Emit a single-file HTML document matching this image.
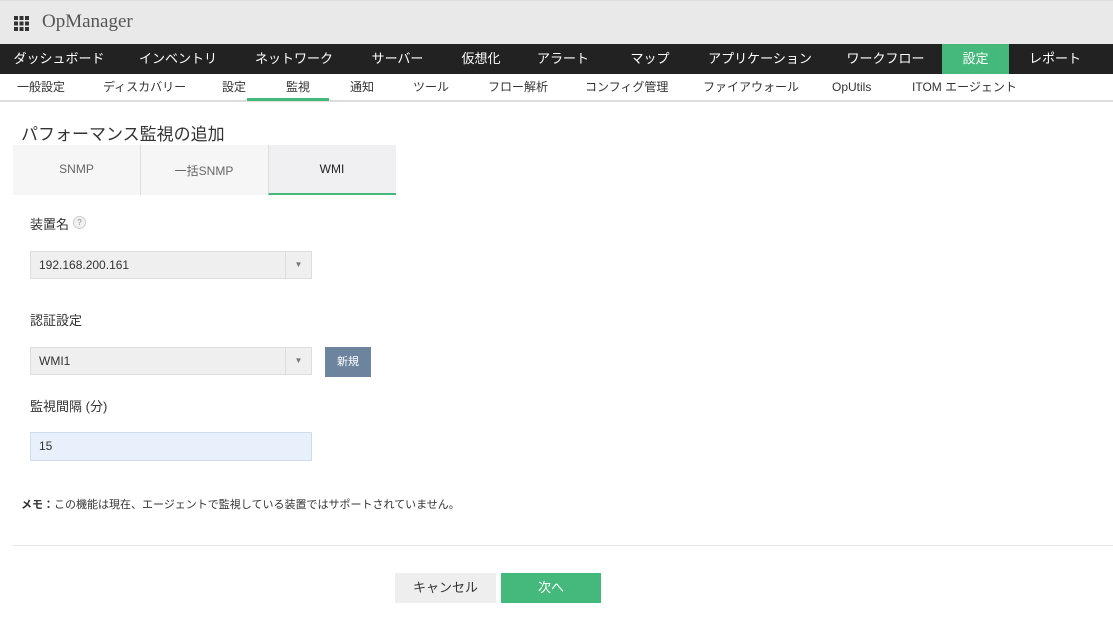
<!DOCTYPE html>
<html><head><meta charset="utf-8"><style>
*{box-sizing:border-box;margin:0;padding:0}
body{width:1113px;height:642px;background:#fff;font-family:"Liberation Sans","Noto Sans CJK JP",sans-serif;position:relative;overflow:hidden;color:#333}
.abs{position:absolute}
#hdr{left:0;top:0;width:1113px;height:44px;background:#e9e9e9;border-top:1px solid #ddd}
#nav{left:0;top:44px;width:1113px;height:30px;background:#222}
#nav span{position:absolute;top:0;height:30px;line-height:30px;color:#fff;font-size:13px;text-align:center}
#sub{left:0;top:74px;width:1113px;height:28px;background:#fff;border-bottom:2px solid #ddd}
#sub span{position:absolute;top:0;line-height:26px;font-size:12px;color:#333}
.lbl{font-size:13px;color:#333}
.sel{background:#efefef;border:1px solid #ddd;height:28px;font-size:12px;line-height:26px;padding-left:8px}
.sel i{position:absolute;right:0;top:0;width:26px;height:26px;border-left:1px solid #ddd;font-style:normal;font-size:8px;text-align:center;color:#777}
</style></head><body>
<div id="hdr" class="abs">
 <svg class="abs" style="left:14px;top:15px" width="15" height="15"><g fill="#333"><rect x="0" y="0" width="4" height="4"/><rect x="5.5" y="0" width="4" height="4"/><rect x="11" y="0" width="4" height="4"/><rect x="0" y="5.5" width="4" height="4"/><rect x="5.5" y="5.5" width="4" height="4"/><rect x="11" y="5.5" width="4" height="4"/><rect x="0" y="11" width="4" height="4"/><rect x="5.5" y="11" width="4" height="4"/><rect x="11" y="11" width="4" height="4"/></g></svg>
 <div class="abs" style="left:42px;top:10px;font-family:'Liberation Serif',serif;font-size:19px;color:#555">OpManager</div>
</div>
<div id="nav" class="abs">
 <span style="left:0;width:118px">ダッシュボード</span>
 <span style="left:118px;width:120px">インベントリ</span>
 <span style="left:238px;width:112px">ネットワーク</span>
 <span style="left:350px;width:95px">サーバー</span>
 <span style="left:445px;width:72px">仮想化</span>
 <span style="left:517px;width:92px">アラート</span>
 <span style="left:609px;width:82px">マップ</span>
 <span style="left:691px;width:138px">アプリケーション</span>
 <span style="left:829px;width:113px">ワークフロー</span>
 <span style="left:942px;width:67px;background:#45b97c">設定</span>
 <span style="left:1009px;width:92px">レポート</span>
</div>
<div id="sub" class="abs">
 <span style="left:17px">一般設定</span>
 <span style="left:103px">ディスカバリー</span>
 <span style="left:222px">設定</span>
 <span style="left:286px">監視</span>
 <span style="left:350px">通知</span>
 <span style="left:413px">ツール</span>
 <span style="left:488px">フロー解析</span>
 <span style="left:585px">コンフィグ管理</span>
 <span style="left:703px">ファイアウォール</span>
 <span style="left:832px">OpUtils</span>
 <span style="left:912px">ITOM エージェント</span>
 <div class="abs" style="left:247px;top:24px;width:82px;height:3px;background:#45b97c"></div>
</div>
<div class="abs" style="left:21px;top:120px;font-size:17px;color:#333">パフォーマンス監視の追加</div>
<div class="abs" style="left:13px;top:145px;width:383px;height:50px;background:#f6f6f6"></div>
<div class="abs" style="left:140px;top:145px;width:1px;height:50px;background:#ddd"></div>
<div class="abs" style="left:268px;top:145px;width:128px;height:50px;background:#f0f0f2;border-left:1px solid #ddd;border-bottom:2px solid #45b97c"></div>
<div class="abs" style="left:13px;top:162px;width:127px;text-align:center;font-size:12px;color:#666">SNMP</div>
<div class="abs" style="left:140px;top:162px;width:128px;text-align:center;font-size:12px;color:#666">一括SNMP</div>
<div class="abs" style="left:268px;top:162px;width:128px;text-align:center;font-size:12px;color:#222">WMI</div>
<div class="abs lbl" style="left:30px;top:214px">装置名</div>
<div class="abs" style="left:73px;top:216px;width:13px;height:13px;border-radius:50%;border:1px solid #ccc;background:#f2f2f2;font-size:8px;text-align:center;line-height:11px;color:#888">?</div>
<div class="abs sel" style="left:30px;top:251px;width:282px">192.168.200.161<i>▼</i></div>
<div class="abs lbl" style="left:30px;top:310px">認証設定</div>
<div class="abs sel" style="left:30px;top:347px;width:282px">WMI1<i>▼</i></div>
<div class="abs" style="left:325px;top:347px;width:46px;height:30px;background:#6c849d;color:#fff;font-size:11px;text-align:center;line-height:30px">新規</div>
<div class="abs lbl" style="left:30px;top:396px">監視間隔 (分)</div>
<div class="abs" style="left:30px;top:432px;width:282px;height:29px;background:#e8f0fc;border:1px solid #cfdcec;font-size:12px;line-height:27px;padding-left:8px">15</div>
<div class="abs" style="left:21px;top:496px;font-size:11px;color:#333"><b>メモ：</b>この機能は現在、エージェントで監視している装置ではサポートされていません。</div>
<div class="abs" style="left:13px;top:545px;width:1100px;height:1px;background:#e6e6e6"></div>
<div class="abs" style="left:395px;top:573px;width:101px;height:30px;background:#eee;font-size:13px;text-align:center;line-height:30px">キャンセル</div>
<div class="abs" style="left:501px;top:573px;width:100px;height:30px;background:#45b97c;color:#fff;font-size:13px;text-align:center;line-height:30px">次へ</div>
</body></html>
